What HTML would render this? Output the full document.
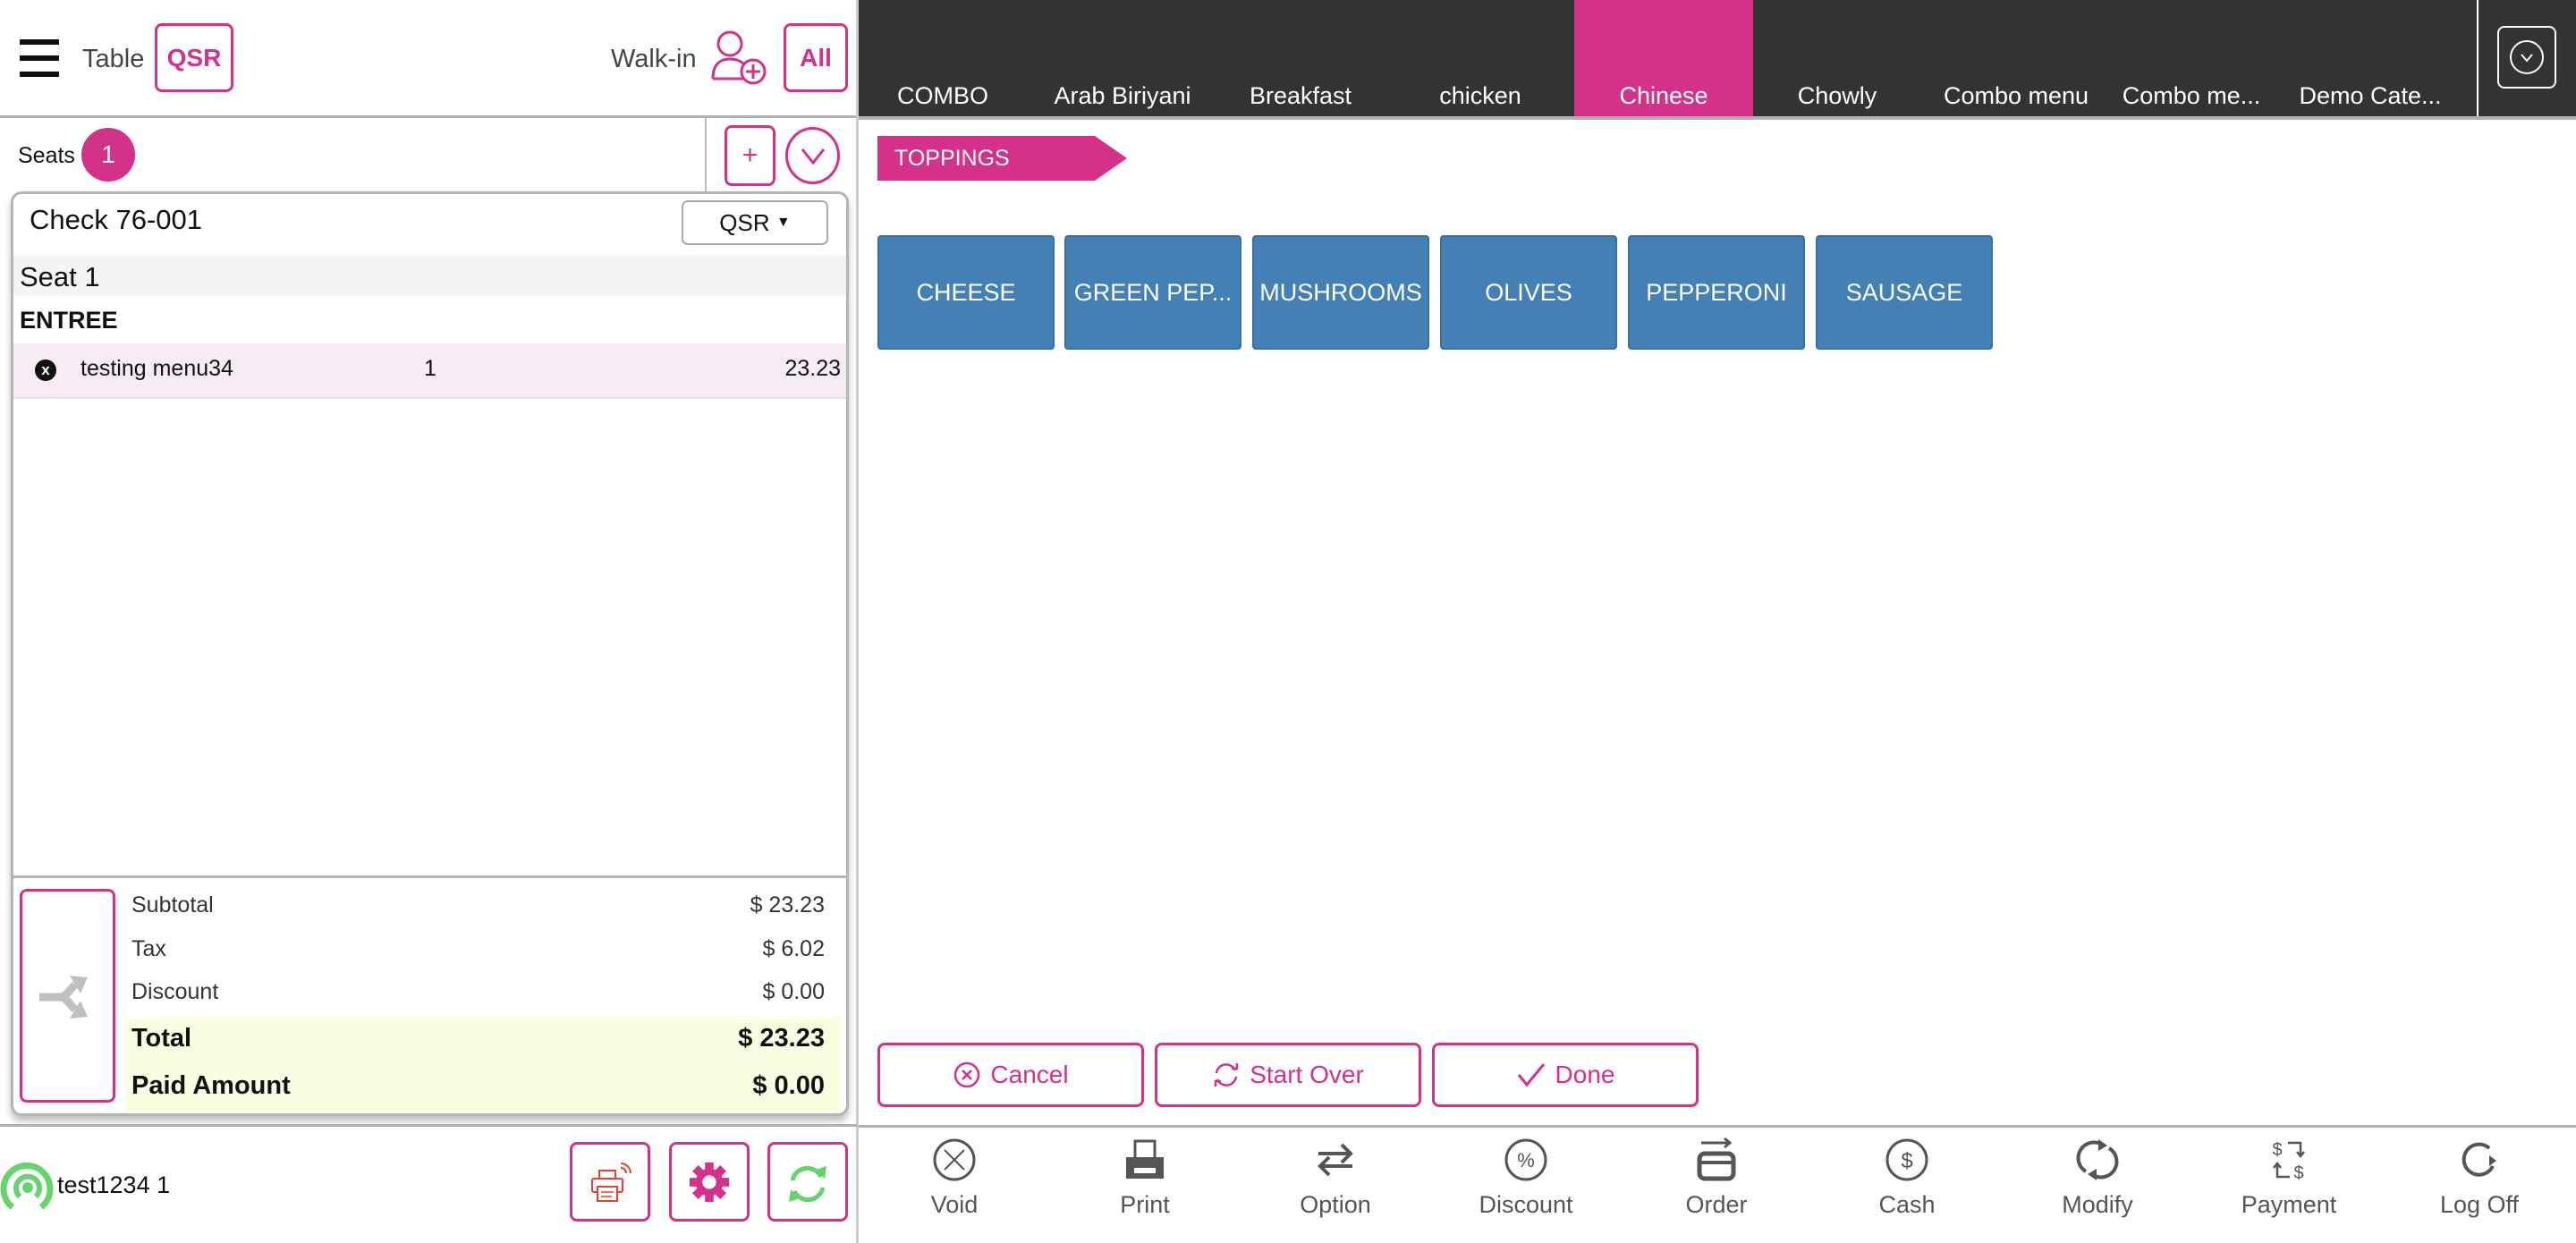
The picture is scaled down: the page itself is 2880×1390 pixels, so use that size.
<!DOCTYPE html>
<html><head><meta charset="utf-8"><style>
*{box-sizing:border-box;margin:0;padding:0}
body{width:2880px;height:1390px;overflow:hidden;background:#fff;font-family:"Liberation Sans",sans-serif;position:relative;color:#111}
.a{position:absolute}
.pk{color:#d3318a}
.pb{border:3px solid #d3318a;border-radius:8px}
.tab{position:absolute;top:0;height:130px;width:200px;color:#fff;font-size:27px;text-align:center;line-height:1;padding-top:94px;white-space:nowrap}
.tb{position:absolute;top:263px;width:198px;height:128px;background:#4380b4;border:2px solid #3a6f9e;border-radius:4px;color:#fff;font-size:27px;display:flex;align-items:center;justify-content:center;white-space:nowrap}
.ab{position:absolute;top:1166px;width:298px;height:72px;border:3px solid #d3318a;border-radius:8px;color:#d3318a;font-size:28px;display:flex;align-items:center;justify-content:center;gap:10px}
.bi{position:absolute;top:1272px;width:200px;text-align:center;color:#555;font-size:27px}
.bi svg{display:block;margin:0 auto 10px}
.row{position:absolute;left:147px;width:775px;font-size:25px;color:#333;display:flex;justify-content:space-between}
</style></head><body>
<div class="a" style="left:22px;top:44px;width:44px;height:6px;background:#111"></div>
<div class="a" style="left:22px;top:62px;width:44px;height:6px;background:#111"></div>
<div class="a" style="left:22px;top:80px;width:44px;height:6px;background:#111"></div>
<div class="a" style="left:92px;top:50px;font-size:29px;color:#444">Table</div>
<div class="a pb pk" style="left:173px;top:26px;width:88px;height:77px;font-size:28px;font-weight:bold;display:flex;align-items:center;justify-content:center">QSR</div>
<div class="a" style="left:683px;top:50px;font-size:29px;color:#444">Walk-in</div>
<svg class="a" style="left:795px;top:34px" width="64" height="62" viewBox="0 0 64 62"><circle cx="21" cy="15" r="13" fill="none" stroke="#d3318a" stroke-width="3"/><path d="M2 54 C2 36 12 32 21 32 C28 32 33 34 37 38" fill="none" stroke="#d3318a" stroke-width="3"/><path d="M2 54 H38" stroke="#d3318a" stroke-width="3"/><circle cx="47" cy="46" r="13" fill="#fff" stroke="#d3318a" stroke-width="3"/><path d="M47 38v16M39 46h16" stroke="#d3318a" stroke-width="3"/></svg>
<div class="a pb pk" style="left:876px;top:26px;width:72px;height:77px;font-size:28px;font-weight:bold;display:flex;align-items:center;justify-content:center">All</div>
<div class="a" style="left:0;top:129px;width:959px;height:3px;background:#b0b0b0"></div>
<div class="a" style="left:957px;top:0;width:3px;height:1390px;background:#ccc"></div>
<div class="a" style="left:20px;top:160px;font-size:25px">Seats</div>
<div class="a" style="left:91px;top:143px;width:60px;height:60px;border-radius:50%;background:#d3318a;color:#fff;font-size:28px;display:flex;align-items:center;justify-content:center">1</div>
<div class="a" style="left:788px;top:132px;width:2px;height:82px;background:#bbb"></div>
<div class="a pb pk" style="left:810px;top:140px;width:57px;height:68px;font-size:30px;display:flex;align-items:center;justify-content:center">+</div>
<div class="a" style="left:878px;top:142px;width:61px;height:64px;border:3px solid #d3318a;border-radius:50%"></div>
<svg class="a" style="left:893px;top:158px" width="32" height="32"><path d="M4 9 L16 24 L28 9" fill="none" stroke="#d3318a" stroke-width="3"/></svg>
<div class="a" style="left:12px;top:214px;width:937px;height:1034px;border:3px solid #b5b5b5;border-radius:12px;box-shadow:0 6px 8px rgba(0,0,0,.25);background:#fff"></div>
<div class="a" style="left:33px;top:228px;font-size:31px">Check 76-001</div>
<div class="a" style="left:762px;top:224px;width:164px;height:50px;border:2px solid #aaa;border-radius:7px;font-size:26px;display:flex;align-items:center;justify-content:center">QSR&nbsp;<span style="font-size:16px">▼</span></div>
<div class="a" style="left:15px;top:285px;width:931px;height:46px;background:#f4f4f4"></div>
<div class="a" style="left:22px;top:292px;font-size:31px">Seat 1</div>
<div class="a" style="left:22px;top:343px;font-size:27px;font-weight:bold">ENTREE</div>
<div class="a" style="left:15px;top:384px;width:931px;height:62px;background:#f8ebf3;border-bottom:2px solid #e2e2e2"></div>
<div class="a" style="left:39px;top:402px;width:24px;height:24px;border-radius:50%;background:#111;color:#fff;font-size:17px;font-weight:bold;text-align:center;line-height:24px">x</div>
<div class="a" style="left:90px;top:398px;font-size:25px">testing menu34</div>
<div class="a" style="left:474px;top:398px;font-size:25px">1</div>
<div class="a" style="left:860px;top:398px;font-size:25px;width:80px;text-align:right">23.23</div>
<div class="a" style="left:15px;top:979px;width:931px;height:3px;background:#b5b5b5"></div>
<div class="a pb" style="left:22px;top:994px;width:107px;height:239px"></div>
<svg class="a" style="left:40px;top:1085px" width="72" height="60" viewBox="0 0 72 60"><path d="M4 30 H26 C34 30 36 24 44 16 M26 30 C34 30 36 36 44 44" fill="none" stroke="#c0c0c0" stroke-width="9"/><path d="M38 6 L58 8 L50 26 Z M38 54 L58 52 L50 34 Z" fill="#c0c0c0"/></svg>
<div class="row" style="top:998px"><span>Subtotal</span><span>$ 23.23</span></div>
<div class="row" style="top:1047px"><span>Tax</span><span>$ 6.02</span></div>
<div class="row" style="top:1095px"><span>Discount</span><span>$ 0.00</span></div>
<div class="a" style="left:140px;top:1137px;width:800px;height:106px;background:#fbfde0"></div>
<div class="row" style="top:1145px;font-size:29px;font-weight:bold;color:#111"><span>Total</span><span>$ 23.23</span></div>
<div class="row" style="top:1198px;font-size:29px;font-weight:bold;color:#111"><span>Paid Amount</span><span>$ 0.00</span></div>
<div class="a" style="left:0;top:1257px;width:959px;height:3px;background:#b0b0b0"></div>
<svg class="a" style="left:0;top:1296px" width="62" height="60" viewBox="0 0 62 60"><path d="M14 54 A26 26 0 1 1 46 54" fill="none" stroke="#66d36e" stroke-width="7"/><path d="M22 42 A13 13 0 1 1 40 42" fill="none" stroke="#66d36e" stroke-width="6"/><circle cx="31" cy="32" r="6" fill="#66d36e"/></svg>
<div class="a" style="left:64px;top:1310px;font-size:27px">test1234 1</div>
<div class="a pb" style="left:637px;top:1277px;width:90px;height:89px"></div>
<svg class="a" style="left:658px;top:1298px" width="50" height="50" viewBox="0 0 50 50"><rect x="12" y="11" width="18" height="9" fill="none" stroke="#e8412f" stroke-width="2"/><rect x="4" y="20" width="34" height="15" rx="2" fill="none" stroke="#e8412f" stroke-width="2"/><rect x="10" y="29" width="22" height="16" fill="#fff" stroke="#e8412f" stroke-width="2"/><path d="M14 35h14M14 40h12" stroke="#e8412f" stroke-width="1.5"/><path d="M36 8a6 6 0 0 1 6 6M36 3a11 11 0 0 1 11 11" fill="none" stroke="#e8412f" stroke-width="2"/></svg>
<div class="a pb" style="left:748px;top:1277px;width:90px;height:89px"></div>
<svg class="a" style="left:770px;top:1298px" width="46" height="48" viewBox="-24 -24 48 48"><g fill="#d3318a"><circle r="16"/><g id="t"><rect x="-5" y="-23" width="10" height="10"/></g><use href="#t" transform="rotate(45)"/><use href="#t" transform="rotate(90)"/><use href="#t" transform="rotate(135)"/><use href="#t" transform="rotate(180)"/><use href="#t" transform="rotate(225)"/><use href="#t" transform="rotate(270)"/><use href="#t" transform="rotate(315)"/></g><circle r="8" fill="#fff"/></svg>
<div class="a pb" style="left:858px;top:1277px;width:90px;height:89px"></div>
<svg class="a" style="left:878px;top:1300px" width="50" height="48" viewBox="0 0 50 48"><path d="M8 20 A17 17 0 0 1 40 16" fill="none" stroke="#66d36e" stroke-width="5"/><path d="M34 8 L44 18 L46 4 Z" fill="#66d36e"/><path d="M42 28 A17 17 0 0 1 10 32" fill="none" stroke="#66d36e" stroke-width="5"/><path d="M16 40 L6 30 L4 44 Z" fill="#66d36e"/></svg>
<div class="a" style="left:960px;top:0;width:1920px;height:130px;background:#333"></div>
<div class="a" style="left:960px;top:130px;width:1920px;height:4px;background:#b0b0b0"></div>
<div class="tab" style="left:954px">COMBO</div>
<div class="tab" style="left:1155px">Arab Biriyani</div>
<div class="tab" style="left:1354px">Breakfast</div>
<div class="tab" style="left:1555px">chicken</div>
<div class="tab" style="left:1760px;background:#d3318a">Chinese</div>
<div class="tab" style="left:1954px">Chowly</div>
<div class="tab" style="left:2154px">Combo menu</div>
<div class="tab" style="left:2350px">Combo me...</div>
<div class="tab" style="left:2550px">Demo Cate...</div>
<div class="a" style="left:2769px;top:0;width:2px;height:130px;background:#fff"></div>
<div class="a" style="left:2792px;top:29px;width:66px;height:70px;border:2px solid #fff;border-radius:8px"></div>
<div class="a" style="left:2806px;top:45px;width:38px;height:38px;border:2px solid #fff;border-radius:50%"></div>
<svg class="a" style="left:2815px;top:54px" width="20" height="20"><path d="M4 7 L10 14 L16 7" fill="none" stroke="#fff" stroke-width="2"/></svg>
<svg class="a" style="left:981px;top:152px" width="280" height="50"><polygon points="0,0 243,0 279,25 243,50 0,50" fill="#d3318a"/></svg>
<div class="a" style="left:1000px;top:163px;font-size:25px;color:#fff">TOPPINGS</div>
<div class="tb" style="left:981px">CHEESE</div>
<div class="tb" style="left:1190px">GREEN PEP...</div>
<div class="tb" style="left:1400px">MUSHROOMS</div>
<div class="tb" style="left:1610px">OLIVES</div>
<div class="tb" style="left:1820px">PEPPERONI</div>
<div class="tb" style="left:2030px">SAUSAGE</div>
<div class="ab" style="left:981px"><svg width="32" height="32"><circle cx="16" cy="16" r="13" fill="none" stroke="#d3318a" stroke-width="2.5"/><path d="M11 11l10 10M21 11l-10 10" stroke="#d3318a" stroke-width="2.5"/></svg>Cancel</div>
<div class="ab" style="left:1291px"><svg width="32" height="32"><path d="M5 14 A11 11 0 0 1 26 11 M27 18 A11 11 0 0 1 6 21" fill="none" stroke="#d3318a" stroke-width="2.5"/><path d="M22 9h6V3M10 23H4v6" fill="none" stroke="#d3318a" stroke-width="2.5"/></svg>Start Over</div>
<div class="ab" style="left:1601px"><svg width="34" height="32"><path d="M3 16 L12 27 L31 4" fill="none" stroke="#d3318a" stroke-width="3"/></svg>Done</div>
<div class="a" style="left:960px;top:1258px;width:1920px;height:3px;background:#b0b0b0"></div>
<div class="bi" style="left:967px"><svg width="50" height="50"><circle cx="25" cy="25" r="22" fill="none" stroke="#555" stroke-width="3"/><path d="M14 14l22 22M36 14l-22 22" stroke="#555" stroke-width="2"/></svg>Void</div>
<div class="bi" style="left:1180px"><svg width="50" height="50"><rect x="14" y="4" width="22" height="20" fill="none" stroke="#555" stroke-width="3"/><rect x="4" y="22" width="42" height="24" fill="#555"/><rect x="13" y="34" width="24" height="6" fill="#fff"/></svg>Print</div>
<div class="bi" style="left:1393px"><svg width="50" height="50"><path d="M6 18H40M32 8l10 10-10 10M44 32H10M18 22L8 32l10 10" fill="none" stroke="#555" stroke-width="4"/></svg>Option</div>
<div class="bi" style="left:1606px"><svg width="50" height="50"><circle cx="25" cy="25" r="22" fill="none" stroke="#555" stroke-width="3"/><text x="25" y="33" font-size="22" text-anchor="middle" fill="#555" font-family="Liberation Sans">%</text></svg>Discount</div>
<div class="bi" style="left:1819px"><svg width="50" height="50"><path d="M8 6H40M34 1l6 5-6 5" fill="none" stroke="#555" stroke-width="3"/><rect x="6" y="18" width="38" height="28" rx="6" fill="none" stroke="#555" stroke-width="5"/><path d="M6 28h38" stroke="#555" stroke-width="4"/></svg>Order</div>
<div class="bi" style="left:2032px"><svg width="50" height="50"><circle cx="25" cy="25" r="22" fill="none" stroke="#555" stroke-width="3"/><text x="25" y="34" font-size="24" text-anchor="middle" fill="#555" font-family="Liberation Sans">$</text></svg>Cash</div>
<div class="bi" style="left:2245px"><svg width="50" height="50"><path d="M12 38 A17 17 0 0 1 30 8 M38 12 A17 17 0 0 1 20 42" fill="none" stroke="#555" stroke-width="4"/><path d="M26 2l10 7-10 6zM24 48l-10-7 10-6z" fill="#555"/></svg>Modify</div>
<div class="bi" style="left:2459px"><svg width="50" height="50"><text x="12" y="20" font-size="20" text-anchor="middle" fill="#555" font-family="Liberation Sans">$</text><text x="36" y="46" font-size="20" text-anchor="middle" fill="#555" font-family="Liberation Sans">$</text><path d="M24 6h14v14M34 16l4 5 4-5M26 44H12V30M8 34l4-5 4 5" fill="none" stroke="#555" stroke-width="2.5"/></svg>Payment</div>
<div class="bi" style="left:2672px"><svg width="50" height="50"><path d="M36 12 A17 17 0 1 0 40 32" fill="none" stroke="#555" stroke-width="4"/><path d="M36 20l8 6-8 6z" fill="#555"/></svg>Log Off</div>
</body></html>
